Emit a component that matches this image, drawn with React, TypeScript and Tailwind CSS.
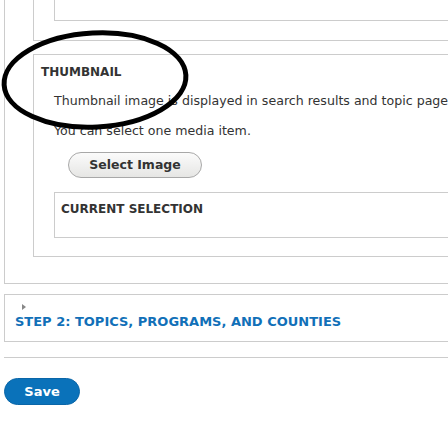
import React from "react";

export default function App() {
  const font = { fontFamily: '"DejaVu Sans", Verdana, sans-serif' };
  return (
    <div className="relative w-[448px] h-[433px] overflow-hidden bg-white text-[#333]" style={font}>
      <div className="pl-[4px] w-[520px]">
        {/* outer fieldset */}
        <div className="border-l border-b border-[#cccccc] h-[284px] pl-[28px] flex flex-col">
          {/* top nested box */}
          <div className="border-l border-b border-[#cccccc] h-[41px] pl-[20px]">
            <div className="border-l border-b border-[#cccccc] h-[21px]" />
          </div>
          {/* thumbnail box */}
          <div className="mt-[13px] border border-[#cccccc] h-[203px] flex flex-col">
            <div className="pl-[7px] pt-[10px] text-[12px] font-bold leading-[14px] h-[26px]">THUMBNAIL</div>
            <div className="pl-[20px] pt-[5px] text-[12.6px] leading-[30px] whitespace-nowrap">
              <div>Thumbnail image is displayed in search results and topic pages.</div>
              <div>You can select one media item.</div>
            </div>
            <div className="pl-[34px] mt-[6px]">
              <button className="w-[134px] h-[26px] rounded-full border border-[#a8a8a8] bg-gradient-to-b from-[#fbfbfb] to-[#e6e6e4] text-[12.5px] font-bold text-[#333]" style={font}>
                Select Image
              </button>
            </div>
            <div className="ml-[20px] mt-[14px] border border-[#cccccc] h-[46px] pl-[6px] pt-[9px] text-[12px] font-bold leading-[14px]">
              CURRENT SELECTION
            </div>
          </div>
        </div>
        {/* step 2 */}
        <div className="mt-[10px] border border-[#cccccc] h-[48px] pl-[10px] relative">
          <div className="pl-[7px] pt-[9px] h-[16px]">
            <div className="w-0 h-0 border-y-[3px] border-y-transparent border-l-[4px] border-l-[#888]" />
          </div>
          <div className="pt-[3px] text-[13px] font-bold leading-[16px] text-[#1170b8] whitespace-nowrap">
            STEP 2: TOPICS, PROGRAMS, AND COUNTIES
          </div>
        </div>
        <div className="mt-[15px] border-t border-[#cccccc]" />
        <div className="mt-[20px]">
          <button className="w-[76px] h-[27px] rounded-full bg-[#0a72ba] border border-[#0a66a8] text-white text-[13px] font-bold" style={font}>
            Save
          </button>
        </div>
      </div>
      <svg className="absolute left-0 top-0 pointer-events-none" width="448" height="433">
        <ellipse cx="95" cy="80" rx="91" ry="47" fill="none" stroke="#000" strokeWidth="5" transform="rotate(-3 95 80)" />
      </svg>
    </div>
  );
}
